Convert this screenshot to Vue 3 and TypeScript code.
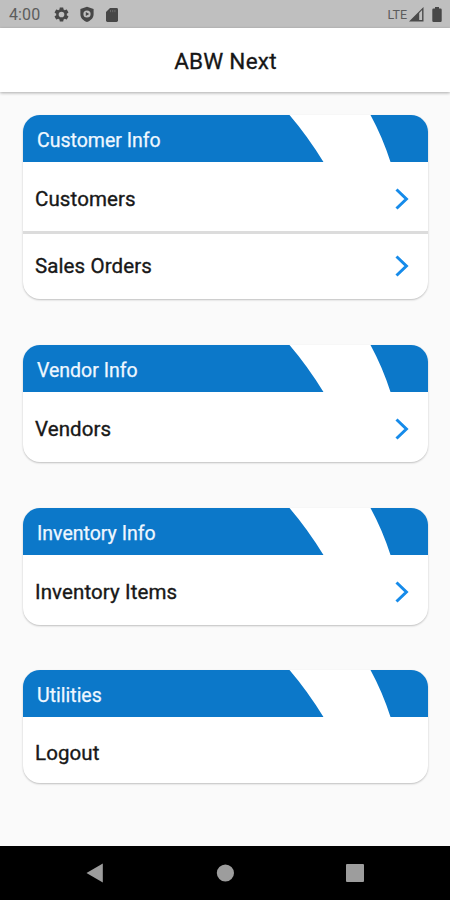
<script setup lang="ts">
interface Row {
  label: string
  arrow: boolean
}
interface Section {
  id: string
  title: string
  rows: Row[]
}

const sections: Section[] = [
  {
    id: 'customer',
    title: 'Customer Info',
    rows: [
      { label: 'Customers', arrow: true },
      { label: 'Sales Orders', arrow: true },
    ],
  },
  { id: 'vendor', title: 'Vendor Info', rows: [{ label: 'Vendors', arrow: true }] },
  { id: 'inventory', title: 'Inventory Info', rows: [{ label: 'Inventory Items', arrow: true }] },
  { id: 'utilities', title: 'Utilities', rows: [{ label: 'Logout', arrow: false }] },
]
</script>

<template>
  <div class="screen">
    <div class="status">
      <span class="clock">4:00</span>
      <svg class="gear" width="17" height="17" viewBox="0 0 24 24" fill="#474747">
        <path d="M19.43 12.98c.04-.32.07-.64.07-.98s-.03-.66-.07-.98l2.11-1.65c.19-.15.24-.42.12-.64l-2-3.46c-.12-.22-.39-.3-.61-.22l-2.49 1c-.52-.4-1.08-.73-1.69-.98l-.38-2.65C14.46 2.18 14.25 2 14 2h-4c-.25 0-.46.18-.49.42l-.38 2.65c-.61.25-1.17.59-1.69.98l-2.49-1c-.23-.09-.49 0-.61.22l-2 3.46c-.13.22-.07.49.12.64l2.11 1.65c-.04.32-.07.65-.07.98s.03.66.07.98l-2.11 1.65c-.19.15-.24.42-.12.64l2 3.46c.12.22.39.3.61.22l2.49-1c.52.4 1.08.73 1.69.98l.38 2.65c.03.24.24.42.49.42h4c.25 0 .46-.18.49-.42l.38-2.65c.61-.25 1.17-.59 1.69-.98l2.49 1c.23.09.49 0 .61-.22l2-3.46c.12-.22.07-.49-.12-.64l-2.11-1.65zM12 16a4 4 0 1 1 0-8 4 4 0 0 1 0 8z" />
      </svg>
      <svg class="shield" width="16" height="17" viewBox="0 0 16 17" fill="#474747">
        <path fill-rule="evenodd" d="M8 .7 14.6 3v5.2c0 3.5-2.6 6.4-6.6 7.7-4-1.3-6.6-4.2-6.6-7.7V3zM8 4.4A3.600 3.600 0 1 0 8 11.600 3.600 3.600 0 0 0 8 4.400zM6.800 5.900 10.300 8 6.800 10.100z" />
      </svg>
      <svg class="sd" width="12" height="14" viewBox="0 0 12 14">
        <path fill="#474747" d="M4 0h6.600Q12 0 12 1.400v11.200Q12 14 10.600 14H1.400Q0 14 0 12.600V4z" />
        <path stroke="#6a6a6a" stroke-width="1" d="M4.500 2v2.200M6.700 2v2.200M8.900 2v2.200" />
      </svg>
      <span class="spacer"></span>
      <span class="lte">LTE</span>
      <svg class="signal" width="15" height="15" viewBox="0 0 15 15">
        <path fill="#4a4a4a" fill-rule="evenodd" d="M14.500 0v14.500H0zM10.200 6v7h2.900V3.100z" />
      </svg>
      <svg class="battery" width="10" height="15" viewBox="0 0 10 15" fill="#474747">
        <path d="M3 0h4v1.500h1.500Q9.700 1.500 9.700 2.700v11Q9.700 14.900 8.500 14.900h-7Q.3 14.900.3 13.700v-11Q.3 1.500 1.500 1.500H3z" />
      </svg>
    </div>

    <header class="appbar">
      <h1>ABW Next</h1>
    </header>

    <main class="content">
      <section v-for="s in sections" :key="s.id" class="card" :class="s.id">
        <div class="head">
          <svg class="swoosh" width="405" height="48" viewBox="0 0 405 48">
            <path fill="#fff" d="M266.500 0Q284.500 21 300.800 47.500H367.700Q359.500 22 347.500 0z" />
          </svg>
          <h2>{{ s.title }}</h2>
        </div>
        <div v-for="r in s.rows" :key="r.label" class="row">
          <span>{{ r.label }}</span>
          <svg v-if="r.arrow" width="14" height="22" viewBox="0 0 14 22">
            <path d="M1.500 1.500 11.400 11 1.500 20.500" fill="none" stroke="#168bea" stroke-width="3" />
          </svg>
        </div>
      </section>
    </main>

    <nav class="navbar">
      <svg width="18" height="20" viewBox="0 0 18 20"><path fill="#9d9d9d" d="M16.800.6v18.800L.5 10z" /></svg>
      <svg width="18" height="20" viewBox="0 0 18 20"><circle cx="9.400" cy="10" r="8.600" fill="#9d9d9d" /></svg>
      <svg width="18" height="20" viewBox="0 0 18 20"><rect x="0" y="1" width="18" height="18" rx="1" fill="#9d9d9d" /></svg>
    </nav>
  </div>
</template>

<style>
body {
  margin: 0;
  background: #fafafa;
}
</style>

<style scoped>
.screen {
  width: 450px;
  height: 900px;
  display: flex;
  flex-direction: column;
  overflow: hidden;
  background: #fafafa;
  font-family: Roboto, "Liberation Sans", sans-serif;
}
.status {
  flex: none;
  box-sizing: border-box;
  height: 28px;
  padding: 1px 8px 0 9px;
  display: flex;
  align-items: center;
  background: #bfbfbf;
  color: #5c5c5c;
}
.clock {
  width: 44px;
  font-size: 16px;
  letter-spacing: 0.1px;
}
.shield {
  margin-left: 9px;
}
.sd {
  margin-left: 11px;
}
.spacer {
  flex: 1;
}
.lte {
  font-size: 12.500px;
}
.signal {
  margin-left: 2px;
}
.battery {
  margin-left: 8px;
}
.appbar {
  flex: none;
  height: 64px;
  display: flex;
  align-items: center;
  justify-content: center;
  background: #fff;
  box-shadow: 0 1px 3px rgba(0, 0, 0, 0.32);
}
h1 {
  margin: 1px 0 0 1px;
  font-size: 22.500px;
  line-height: 26px;
  font-weight: 400;
  letter-spacing: 0.25px;
  color: #161616;
  -webkit-text-stroke: 0.3px #161616;
}
.content {
  flex: 1;
  display: flex;
  flex-direction: column;
  padding: 23px 22.500px 0 23px;
}
.card {
  flex: none;
  border-radius: 17px;
  background: #fff;
  overflow: hidden;
  box-shadow: 0 1px 2px rgba(0, 0, 0, 0.24);
}
.customer {
  height: 183.500px;
  margin-bottom: 46.500px;
}
.vendor {
  height: 116.500px;
  margin-bottom: 46px;
}
.inventory {
  height: 117px;
  margin-bottom: 45.500px;
}
.utilities {
  height: 113px;
}
.head {
  position: relative;
  height: 47.400px;
  display: flex;
  align-items: center;
  background: #0c78c9;
}
.swoosh {
  position: absolute;
  top: 0;
  left: 0;
}
h2 {
  margin: 4px 0 0 14px;
  font-size: 19.500px;
  line-height: 24px;
  font-weight: 400;
  letter-spacing: 0;
  color: #eff7ff;
  -webkit-text-stroke: 0.25px #eff7ff;
}
.inventory h2,
.utilities h2 {
  margin-top: 5px;
}
.row {
  box-sizing: border-box;
  height: 68.600px;
  padding: 4px 18.500px 0 12px;
  display: flex;
  align-items: center;
  justify-content: space-between;
  font-size: 20.500px;
  font-weight: 400;
  letter-spacing: 0.1px;
  color: #181818;
  -webkit-text-stroke: 0.35px #181818;
}
.row + .row {
  height: 67px;
  padding-top: 0;
  border-top: 3px solid #dcdcdc;
}
.inventory .row {
  padding-top: 5px;
}
.utilities .row {
  padding-top: 2.500px;
}
.navbar {
  flex: none;
  height: 54px;
  padding: 0 86px;
  display: flex;
  align-items: center;
  justify-content: space-between;
  background: #000;
}
</style>
